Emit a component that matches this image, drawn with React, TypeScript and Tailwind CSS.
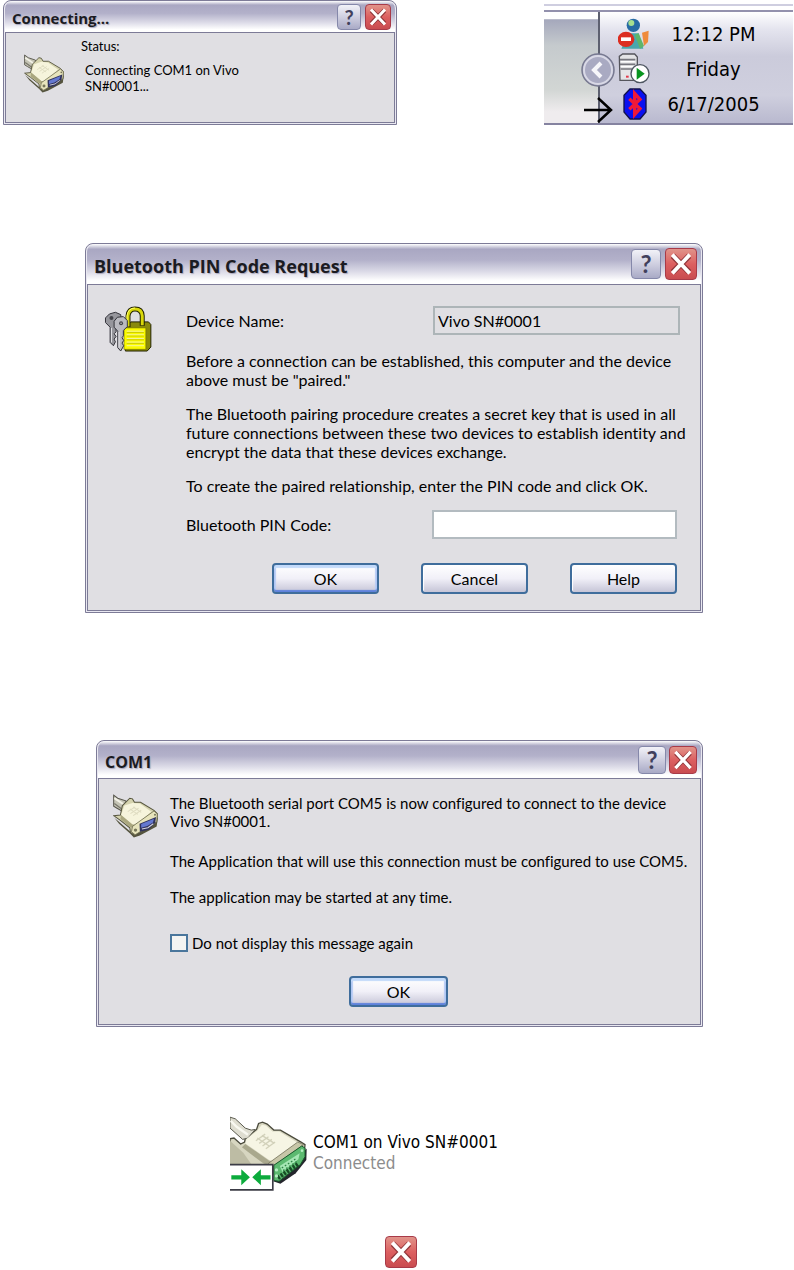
import { useState, type ReactNode } from "react";

/* Windows XP "Silver" title buttons */
function CloseButton({ size }: { size: "sm" | "md" | "lg" }) {
  const box = size === "sm" ? "h-[26px] w-[26px]" : size === "md" ? "h-7 w-7" : "h-8 w-8";
  return (
    <button
      type="button"
      aria-label="Close"
      className={`${box} flex shrink-0 items-center justify-center rounded-sm border border-[#a83a48] bg-gradient-to-b from-[#e0938a] via-[#dc5f60] to-[#c94c50]`}
    >
      <svg viewBox="0 0 24 24" className="h-full w-full" aria-hidden>
        <path d="M5.5 5.5 18.5 18.5M18.5 5.5 5.5 18.5" stroke="#8e3438" strokeWidth="4.6" />
        <path d="M5 4.5 19 19.5M19 4.5 5 19.5" stroke="#fff" strokeWidth="3" />
      </svg>
    </button>
  );
}

function HelpButton({ size }: { size: "sm" | "md" | "lg" }) {
  const box = size === "sm" ? "h-[26px] w-6 text-xl" : size === "md" ? "h-7 w-7 text-2xl" : "h-[30px] w-[30px] text-2xl";
  return (
    <button
      type="button"
      aria-label="Help"
      className={`${box} flex shrink-0 items-center justify-center rounded-sm border border-[#8588aa] bg-gradient-to-b from-[#f2f2f8] via-[#cfcfe0] to-[#a9aac6] leading-none font-bold text-[#41405c]`}
    >
      ?
    </button>
  );
}

function Dialog({
  title,
  size,
  children,
}: {
  title: string;
  size: "sm" | "md" | "lg";
  children: ReactNode;
}) {
  const bar =
    size === "sm"
      ? "h-[31px] text-[15px] gap-1"
      : size === "md"
        ? "h-[37px] text-base gap-[3px]"
        : "h-10 text-lg gap-1";
  return (
    <section className="flex w-full flex-col rounded-t-lg border border-[#7d7b97] bg-[#e9e8f1] px-px pb-px">
      <header
        className={`${bar} flex items-center rounded-t-lg bg-[linear-gradient(to_bottom,#ffffff_0%,#a9a7c2_13%,#b3b1ca_40%,#dddce8_70%,#ffffff_92%)] pr-1 pl-[7px]`}
      >
        <h2 className="flex-1 pt-1 font-['Open_Sans',sans-serif] font-bold text-[#1b1b22] [text-shadow:1px_1px_1px_#aaa8bc]">
          {title}
        </h2>
        <HelpButton size={size} />
        <CloseButton size={size} />
      </header>
      <div className="flex-1 border border-[#7d7b97] bg-[#e0dfe3]">{children}</div>
    </section>
  );
}

function PushButton({
  children,
  isDefault,
  className = "w-[107px]",
}: {
  children: ReactNode;
  isDefault?: boolean;
  className?: string;
}) {
  const glow = isDefault
    ? "shadow-[inset_0_3px_1px_#c3dafa,inset_0_-2px_1px_#5f82dc,inset_2px_0_1px_#b9cdf5,inset_-2px_0_1px_#b9cdf5]"
    : "shadow-[inset_1px_1px_1px_#fff]";
  return (
    <button
      type="button"
      className={`${className} ${glow} h-[31px] rounded border-2 border-[#3f6d9c] bg-gradient-to-b from-white via-[#f1f0f8] to-[#c6c5d7] text-base leading-none`}
    >
      {children}
    </button>
  );
}

/* Serial plug with its blue D-sub face */
function SerialPlug({ className }: { className: string }) {
  return (
    <svg viewBox="0 0 134 130" className={className} aria-hidden>
      <path d="M4 70 18 88 50 116 62 129 80 123 130 96 134 66 126 84 64 122Z" fill="#55543e" />
      <path d="M2 3 14 12 38 20 44 40 26 50 12 42 2 36Z" fill="#c4c3b4" stroke="#55544a" strokeWidth="3" />
      <path d="M4 12 34 32" stroke="#f2f1e6" strokeWidth="6" />
      <path d="M4 28 26 44" stroke="#77766a" strokeWidth="4" />
      <path d="M2 64 22 62 28 34 50 12 58 14 64 24 82 24 122 48 132 58 130 84 64 122 52 114 50 100 22 78Z" fill="#d5d3ae" stroke="#55543e" strokeWidth="3" />
      <path d="M34 34 58 26 80 28 114 52 70 92 58 90 24 62Z" fill="#f6f4dc" />
      <path d="M24 62 58 90 70 92 66 102 50 98 22 74Z" fill="#aaa77f" />
      <path d="M44 52 66 38M52 58 76 42M60 64 84 48M50 44 74 60M60 38 84 54" stroke="#dedbc0" strokeWidth="3" />
      <path d="M58 96 122 50 132 59 130 82 66 121 55 112Z" fill="#e7e4bc" stroke="#6b694c" strokeWidth="2.5" />
      <path d="M79 88 128 68 126 84 106 106 80 112Z" fill="#30325c" />
      <path d="M84 89 122 73 119 84 102 95 84 100Z" fill="#6478d0" />
      <path d="M86 104 104 100 120 88" stroke="#d6d6e2" strokeWidth="3" fill="none" />
      <circle cx="67" cy="107" r="5" fill="#78775a" />
      <circle cx="125" cy="61" r="3" fill="#78775a" />
    </svg>
  );
}

/* Larger plug with green face and the "connected" arrows badge */
function ConnectedPlug() {
  return (
    <svg viewBox="0 0 232 228" className="h-[76px] w-[77px] shrink-0" aria-hidden>
      <path d="M130 196 152 204 198 172 230 132 231 98 214 110Z" fill="#24262c" />
      <path d="M0 68 12 66 32 84 44 78 46 66 80 40 86 22 98 18 112 24 132 42 152 42 214 78 226 86 224 108 138 172 120 150 0 150Z" fill="#d7d6c0" stroke="#4a4a3c" strokeWidth="4" />
      <path d="M0 3 16 8 46 36 64 42 76 40 54 66 38 70 18 52 0 36Z" fill="#deddd0" stroke="#5a5a4e" strokeWidth="3" />
      <path d="M2 14 20 32 54 56" stroke="#f8f8f0" strokeWidth="7" fill="none" />
      <path d="M50 68 82 44 96 26 108 28 128 46 148 46 204 80 132 136 118 132 46 82Z" fill="#f6f5e4" />
      <path d="M46 84 118 134 132 138 128 154 100 142 36 94Z" fill="#a9a88d" />
      <path d="M0 74 40 110 64 144 0 144Z" fill="#bdbca4" />
      <path d="m78 74 28 -20M88 82l28-20M98 90l28-20M108 98l28-20M82 66l36 24M96 58l38 24" stroke="#d2d1ba" strokeWidth="4" />
      <path d="M116 142 204 78 222 86 132 150 130 176Z" fill="#c8c6a8" stroke="#77755e" strokeWidth="2.5" />
      <path d="M132 148 216 90 226 96 226 122 212 146 148 196 132 194Z" fill="#5cba70" stroke="#17592b" strokeWidth="3" />
      <path d="M150 150 210 112 206 130 158 168Z" fill="#a5e7b4" />
      <path d="m144 186 62 -42" stroke="#164d25" strokeWidth="13" strokeDasharray="7 4" />
      <path d="m156 156 46-30M160 164l42-28" stroke="#2d8545" strokeWidth="4" strokeDasharray="5 6" />
      <circle cx="140" cy="162" r="5" fill="#b4eec0" />
      <circle cx="140" cy="180" r="5" fill="#b4eec0" />
      <circle cx="217" cy="104" r="4" fill="#b4eec0" />
      <path d="M-4 146H129V222H-4Z" fill="#fff" stroke="#3c3c46" strokeWidth="5" />
      <path d="M4 178H34V160L60 184 34 208V191H4Z" fill="#0cab3c" />
      <path d="M122 178H93V160L67 184 93 208V191H122Z" fill="#0cab3c" />
    </svg>
  );
}

function KeysAndLock() {
  return (
    <svg viewBox="16 14 144 148" className="h-[49px] w-12 shrink-0" aria-hidden>
      <path d="M80 80 96 62H150L157 70V138L146 150H80Z" fill="#8a8a0c" stroke="#222200" strokeWidth="3" />
      <path d="M88 78V44Q90 23 109 23 130 23 131 44V74" fill="none" stroke="#222200" strokeWidth="15" />
      <path d="M88 76V44Q90 23 109 23 130 23 131 44V72" fill="none" stroke="#d9d80a" strokeWidth="9" />
      <path d="M85 66V44Q88 20 109 20" fill="none" stroke="#ffff70" strokeWidth="3" />
      <path d="M76 80H142V145H76Z" fill="#fbfb00" stroke="#6e6e00" strokeWidth="2" />
      <path d="M84 90H136M84 101H136M84 112H136M84 123H136M84 134H136" stroke="#f4f4a8" strokeWidth="3" />
      <path d="M84 94H136M84 105H136M84 116H136M84 127H136" stroke="#b8b800" strokeWidth="2" />
      <g stroke="#33333a" strokeWidth="3">
        <path d="M20 50 32 38 50 33 66 40 68 58 52 74 52 92 46 98 52 106 46 114 50 122 44 134 34 124V78L20 64Z" fill="#96969c" />
        <path d="M46 60 56 48 74 46 86 58 86 76 74 88V104L70 110 75 118 70 126 75 134 66 150 57 140V90L46 78Z" fill="#babac0" />
      </g>
      <path d="M38 80V124M61 92V140" stroke="#e6e6ea" strokeWidth="3" />
      <circle cx="38" cy="50" r="6" fill="#44444a" />
      <circle cx="67" cy="66" r="6" fill="#44444a" />
      <circle cx="67" cy="66" r="2" fill="#ddd" />
    </svg>
  );
}

function MessengerIcon() {
  return (
    <svg viewBox="0 0 96 96" className="h-8 w-8" aria-hidden>
      <path d="M10 92 18 74 34 46H62L76 92Z" fill="#49a7ad" />
      <path d="M50 50 62 46 78 84 66 92Z" fill="#5fb56b" />
      <path d="M72 44 92 38 90 72 78 84Z" fill="#ef8b3c" />
      <circle cx="46" cy="22" r="20" fill="#276ba4" />
      <circle cx="40" cy="15" r="9" fill="#a6df8f" />
      <ellipse cx="24" cy="64" rx="25" ry="23" fill="#dc2d20" />
      <path d="M9 58H39V69H9Z" fill="#fff" />
    </svg>
  );
}

function ServerIcon() {
  return (
    <svg viewBox="0 0 96 96" className="h-8 w-8" aria-hidden>
      <path d="M4 10 14 3H50L58 12V36L52 82H6Z" fill="#e4e4e6" stroke="#55555c" strokeWidth="4" />
      <path d="M6 20H52M6 34H52M8 48H48" stroke="#77777e" strokeWidth="5" />
      <path d="M8 26H50M8 40H48" stroke="#fff" strokeWidth="4" />
      <path d="M24 68h8v6h-8z" fill="#e23a4a" />
      <circle cx="66" cy="62" r="27" fill="#fff" stroke="#4d5560" strokeWidth="4" />
      <path d="M56 44 80 62 56 80Z" fill="#08951f" />
    </svg>
  );
}

function BluetoothIcon() {
  return (
    <svg viewBox="0 0 96 96" className="h-8 w-8" aria-hidden>
      <path d="M36 3H66L84 22V72L66 93H36L18 72V22Z" fill="#0a10f0" stroke="#12124a" strokeWidth="4" />
      <path d="M34 32 66 62 50 80V16L66 34 34 64" fill="none" stroke="#f01838" strokeWidth="10" />
    </svg>
  );
}

const TRAY_ROWS = [
  { label: "12:12 PM", icon: <MessengerIcon /> },
  { label: "Friday", icon: <ServerIcon /> },
  { label: "6/17/2005", icon: <BluetoothIcon /> },
];

function SystemTray() {
  return (
    <aside className="relative mt-1 flex h-[121px] w-[249px] shrink-0 flex-col border-t-2 border-b-2 border-t-[#cfcee0] border-b-[#8583a0] bg-white pt-1">
      <div className="flex flex-1 border-t-2 border-[#9391ad]">
        <div className="w-14 border-r-2 border-[#5d6070] bg-[linear-gradient(to_bottom,#ffffff_6%,#a5a8bc_7%,#c5cacd_30%,#d2d6d4_70%,#efecee_90%)]" />
        <ul className="flex flex-1 flex-col bg-[linear-gradient(to_bottom,#ffffff_0%,#e5e5ef_15%,#cbcbdb_40%,#cfcfde_75%,#b9b9cf_100%)] pt-1 pl-[18px]">
          {TRAY_ROWS.map((row) => (
            <li key={row.label} className="flex h-[35px] items-center">
              {row.icon}
              <span className="flex-1 pr-4 text-center font-['DejaVu_Sans_Condensed','DejaVu_Sans',sans-serif] text-xl leading-none text-black">
                {row.label}
              </span>
            </li>
          ))}
        </ul>
      </div>
      {/* Collapse chevron and pointer sit across the tray divider */}
      <button type="button" aria-label="Show hidden icons" className="absolute top-[46px] left-9">
        <svg viewBox="0 0 36 36" className="h-9 w-9" aria-hidden>
          <circle cx="18" cy="18" r="16" fill="#a9aac2" stroke="#777990" strokeWidth="1.5" />
          <circle cx="18" cy="18" r="14" fill="none" stroke="#d9d9e6" strokeWidth="2" />
          <path d="M21 11 14 18 21 25" fill="none" stroke="#f6f6fa" strokeWidth="4" />
        </svg>
      </button>
      <svg viewBox="0 0 30 28" className="absolute top-[90px] left-10 h-7 w-[30px]" aria-hidden>
        <path d="M0 14H27M14 2 27 14 14 26" fill="none" stroke="#000" strokeWidth="2.5" />
      </svg>
    </aside>
  );
}

export default function App() {
  const [pin, setPin] = useState("");
  const [hideMessage, setHideMessage] = useState(false);

  return (
    <main className="flex flex-col bg-white font-[Lato,sans-serif] text-black [font-variant-ligatures:none]">
      <div className="flex items-start justify-between gap-4 pr-px pl-[3px]">
        <div className="w-full max-w-[394px]">
          <Dialog title="Connecting..." size="sm">
            <div className="flex h-[89px] pt-[5px] pl-[18px] text-[13px] leading-4">
              <SerialPlug className="mt-4 h-[39px] w-10 shrink-0" />
              <div className="pl-[17px]">
                <p>Status:</p>
                <p className="pt-2 pl-1">
                  Connecting COM1 on Vivo
                  <br />
                  SN#0001...
                </p>
              </div>
            </div>
          </Dialog>
        </div>
        <SystemTray />
      </div>

      <div className="pt-[118px] pr-[91px] pl-[85px]">
        <Dialog title="Bluetooth PIN Code Request" size="lg">
          <form className="flex pt-[21px] pr-5 pb-4 pl-4 text-base leading-[19px]">
            <div className="w-[82px] shrink-0">
              <KeysAndLock />
            </div>
            <div className="min-w-0 flex-1">
              <div className="flex items-center justify-between">
                <label htmlFor="device">Device Name:</label>
                <input
                  id="device"
                  readOnly
                  value="Vivo SN#0001"
                  className="h-[29px] w-1/2 border-2 border-[#adb5b8] bg-transparent px-[3px] outline-none"
                />
              </div>
              <div className="flex flex-col gap-[15px] pt-4 pr-[3px]">
                <p className="whitespace-nowrap">
                  Before a connection can be established, this computer and the device
                  <br />
                  above must be "paired."
                </p>
                <p className="whitespace-nowrap">
                  The Bluetooth pairing procedure creates a secret key that is used in all
                  <br />
                  future connections between these two devices to establish identity and
                  <br />
                  encrypt the data that these devices exchange.
                </p>
                <p>To create the paired relationship, enter the PIN code and click OK.</p>
                <div className="flex items-center justify-between">
                  <label htmlFor="pin">Bluetooth PIN Code:</label>
                  <input
                    id="pin"
                    value={pin}
                    onChange={(e) => setPin(e.target.value)}
                    className="h-[29px] w-1/2 border-2 border-[#b3bbc0] bg-white px-[3px] outline-none"
                  />
                </div>
              </div>
              <div className="flex justify-end gap-[42px] pt-6 pr-[3px]">
                <PushButton isDefault>OK</PushButton>
                <PushButton>Cancel</PushButton>
                <PushButton>Help</PushButton>
              </div>
            </div>
          </form>
        </Dialog>
      </div>

      <div className="pt-[127px] pr-[91px] pl-24">
        <Dialog title="COM1" size="md">
          <div className="pt-[15px] pb-[17px] pl-[14px] text-[15px] leading-[18px]">
            <div className="flex">
              <div className="w-[57px] shrink-0">
                <SerialPlug className="h-11 w-[45px]" />
              </div>
              <div>
                <p>
                  The Bluetooth serial port COM5 is now configured to connect to the device
                  <br />
                  Vivo SN#0001.
                </p>
                <p className="pt-[22px]">
                  The Application that will use this connection must be configured to use COM5.
                </p>
                <p className="pt-[18px]">The application may be started at any time.</p>
                <label className="flex items-center gap-1 pt-7">
                  <input
                    type="checkbox"
                    checked={hideMessage}
                    onChange={(e) => setHideMessage(e.target.checked)}
                    className="h-[18px] w-[18px] appearance-none border-2 border-[#4a769c] bg-[#f4f4f2] checked:bg-[#4a769c]"
                  />
                  Do not display this message again
                </label>
              </div>
            </div>
            <div className="flex justify-center pt-6 pr-4">
              <PushButton isDefault className="w-[99px]">
                OK
              </PushButton>
            </div>
          </div>
        </Dialog>
      </div>

      <div className="flex pt-[89px] pl-[230px]">
        <ConnectedPlug />
        <div className="pt-4 pl-[6px] font-['DejaVu_Sans_Condensed','DejaVu_Sans',sans-serif] text-[17px] leading-[21px]">
          <p>COM1 on Vivo SN#0001</p>
          <p className="text-[#8c8c8c]">Connected</p>
        </div>
      </div>

      <div className="flex justify-center pt-11 pl-2">
        <CloseButton size="lg" />
      </div>
    </main>
  );
}
